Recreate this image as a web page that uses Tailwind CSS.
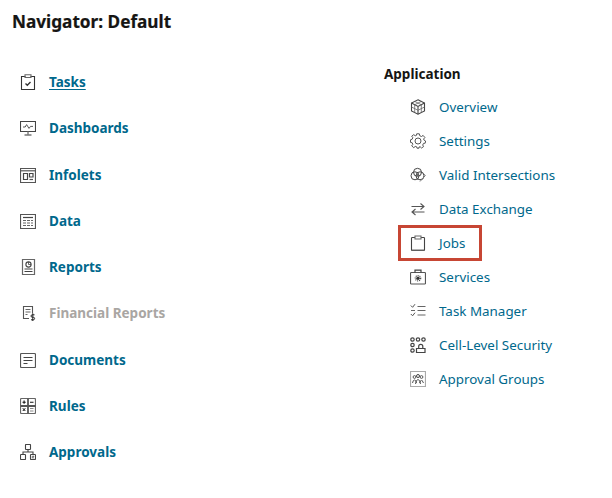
<!doctype html>
<html><head><meta charset="utf-8"><script src="https://cdn.jsdelivr.net/npm/@tailwindcss/browser@4"></script></head>
<body class="bg-white w-[612px] h-[498px] overflow-hidden font-['Noto_Sans']">
<div class="pl-3 pt-[10px] h-[59px]"><h1 class="text-[17.2px] leading-6 font-bold text-[#161513] [-webkit-text-stroke:0.2px_#161513]">Navigator: Default</h1></div>
<div class="flex pl-5">
<div class="w-[364px] pt-[11px] flex flex-col gap-[22.25px] text-[13.5px] leading-6 font-bold text-[#00688c]">
<div class="flex items-center gap-[13px]">
<svg class="w-4 h-4 shrink-0" viewBox="0 0 16 16" fill="none" stroke="#333" stroke-width="1.1"><path d="M5.5 2.5H1.5V15.5H14.5V2.5H10.5"/><path d="M5 .8H11V3.5H5Z" stroke="#666"/><path d="M5.5 9.5L7.3 11.2L10.5 8" stroke-width="1.4"/></svg>
<span class="underline underline-offset-2">Tasks</span></div>
<div class="flex items-center gap-[13px]">
<svg class="w-4 h-4 shrink-0" viewBox="0 0 16 16" fill="none" stroke="#444" stroke-width="1.1"><path d="M.5 1.5H15.5V11.5H.5Z"/><path d="M3 7H5.2L6.6 4.6L9 8.4L10.5 6.4H13" stroke-width=".9"/><path d="M8 11.5V14.5M4.5 15H11.5" stroke-width="1.4" stroke="#777"/></svg>
Dashboards</div>
<div class="flex items-center gap-[13px]">
<svg class="w-4 h-4 shrink-0" viewBox="0 0 16 16" fill="none" stroke="#555" stroke-width="1.2"><path d="M.5 1.5H15.5V15.5H.5Z"/><path d="M.5 3.8H15.5" /><path d="M3.5 6.5H7.5V12.5H3.5ZM9.5 6.5H13V10H9.5Z" stroke="#444"/><path d="M9.5 12.5H13"/></svg>
Infolets</div>
<div class="flex items-center gap-[13px]">
<svg class="w-4 h-4 shrink-0" viewBox="0 0 16 16" fill="none" stroke="#555" stroke-width="1.2"><path d="M.5 1.5H15.5V15.5H.5Z"/><path d="M3 4.5H13" stroke="#444" stroke-width="1.2"/><path d="M3 7.5H13M3 10H13M3 12.5H13" stroke-dasharray="3 1" stroke="#666"/></svg>
Data</div>
<div class="flex items-center gap-[13px]">
<svg class="w-4 h-4 shrink-0" viewBox="0 0 16 16" fill="none" stroke="#444" stroke-width="1.1"><path d="M2.5 .5H14.5V15.5H2.5Z" stroke="#666" stroke-width="1.2"/><circle cx="8.5" cy="5.5" r="2.6"/><path d="M8.5 5.5V2.9M8.5 5.5H11.1" stroke-width=".8"/><path d="M4.5 10H12.5M4.5 12.5H12.5" stroke-width="1.2"/></svg>
Reports</div>
<div class="flex items-center gap-[13px] text-[#a9a6a3]">
<svg class="w-4 h-4 shrink-0" viewBox="0 0 16 16" fill="none" stroke="#555" stroke-width="1.1"><path d="M9 13.5H3.5V1.5H12.5V8.5"/><path d="M5.5 4.5H10.5M5.5 7H10.5M5.5 9.5H7.5" stroke-width=".9"/><path d="M14.5 9.8H12.3Q11 9.8 11 11T12.3 12.3H13.3Q14.6 12.3 14.6 13.5T13.3 14.8H11M12.8 8.5V16" stroke="#222" stroke-width="1"/></svg>
Financial Reports</div>
<div class="flex items-center gap-[13px]">
<svg class="w-4 h-4 shrink-0" viewBox="0 0 16 16" fill="none" stroke="#555" stroke-width="1.2"><rect x=".5" y="1.5" width="15" height="14" rx="1"/><path d="M3.5 5.5H12.5M3.5 8.5H12.5M3.5 11.5H7.5" stroke="#444"/></svg>
Documents</div>
<div class="flex items-center gap-[13px]">
<svg class="w-4 h-4 shrink-0" viewBox="0 0 16 16" fill="none" stroke="#555"><rect x=".5" y=".5" width="15" height="15" rx="1" stroke="#666" stroke-width="1.2"/><path d="M8 .5V15.5M.5 8H15.5" stroke="#555" stroke-width="1.8"/><path d="M2.5 4.2H5.7M4.1 2.5V5.8M10 4.2H13.5" stroke="#111" stroke-width="1.1"/><path d="M2.8 10.2L5.3 13M5.3 10.2L2.8 13" stroke="#111"/><path d="M10 10.5H13.5M10 13H13.5" stroke="#888"/></svg>
Rules</div>
<div class="flex items-center gap-[13px]">
<svg class="w-4 h-4 shrink-0" viewBox="0 0 16 16" fill="none" stroke="#444" stroke-width="1.1"><rect x="5.5" y=".5" width="5" height="5" rx=".6"/><rect x=".5" y="10.5" width="5" height="5" rx=".6"/><rect x="10.5" y="10.5" width="5" height="5" rx=".6"/><path d="M8 5.5V8M3 10.5V8H13V10.5"/><path d="M12.3 14.5V12.2H14L13 13.4L14.2 14.5" stroke-width=".7"/></svg>
Approvals</div>
</div>
<div class="text-[13.4px] text-[#00688c]">
<div class="font-bold text-[13.5px] text-[#161513] leading-6 mt-[3px] mb-[9px]">Application</div>
<div class="flex flex-col gap-[10px] pl-[26px] leading-6">
<div class="flex items-center gap-[13px]">
<svg class="w-4 h-4 shrink-0" viewBox="0 0 16 16" fill="none" stroke="#444" stroke-width="1.1"><path d="M8 .8L14.5 4V12L8 15.2L1.5 12V4Z"/><path d="M1.5 4L8 7.4L14.5 4M8 7.4V15.2"/><path d="M4.7 2.4L11.2 5.7M11.3 2.4L4.8 5.7M4.7 5.7V13.6M11.3 5.7V13.6M1.5 8L8 11.3L14.5 8" stroke-width=".8" stroke="#666"/></svg>
Overview</div>
<div class="flex items-center gap-[13px]">
<svg class="w-4 h-4 shrink-0" viewBox="0 0 16 16" fill="none" stroke="#555" stroke-width="1"><circle cx="8" cy="8" r="3"/><path d="M6.7.8H9.3L9.8 2.8L11.5 3.5L13.1 2.4L14.9 4.5L13.6 6L14.1 7.2L15.6 8L15.2 10.2L13.5 10.4L12.7 12L13.6 13.6L11.5 15L10.2 13.8L9 14V15.2H7L6.7 13.8L5.2 13.4L3.8 14.7L1.7 12.9L2.8 11.4L2.2 9.8L.5 9.4V6.8L2.2 6.2L2.8 4.7L1.7 3.2L3.8 1.6L5.2 2.8L6.4 2.4Z" stroke-linejoin="round"/></svg>
Settings</div>
<div class="flex items-center gap-[13px]">
<svg class="w-4 h-4 shrink-0" viewBox="0 0 16 16" fill="none" stroke="#444" stroke-width="1"><circle cx="7.5" cy="5.3" r="4"/><circle cx="5" cy="8.8" r="4"/><circle cx="10" cy="8.8" r="4"/><path d="M6.5 6.8H8.8V9H6.5Z" fill="#666" stroke="none"/><path d="M12.5 5.5L15.3 8.6L10 14.5" stroke="#777"/></svg>
Valid Intersections</div>
<div class="flex items-center gap-[13px]">
<svg class="w-4 h-4 shrink-0" viewBox="0 0 16 16" fill="none" stroke="#555" stroke-width="1.1"><path d="M1.5 5.5H14M10.5 2.5L14 5.5L10.5 8.5M14.5 11H2M5.5 8L2 11L5.5 14"/></svg>
Data Exchange</div>
<div class="relative flex items-center gap-[13px]">
<span class="absolute left-[-12px] top-[-6px] w-[84px] h-9 border-[3px] border-[#c74634]"></span>
<svg class="w-4 h-4 shrink-0" viewBox="0 0 16 16" fill="none" stroke="#444" stroke-width="1.1"><path d="M5 2.5H2.2Q1.5 2.5 1.5 3.2V14.8Q1.5 15.5 2.2 15.5H13.8Q14.5 15.5 14.5 14.8V3.2Q14.5 2.5 13.8 2.5H11"/><path d="M5 1H11V4H5Z" stroke="#666"/><path d="M2 15H14" stroke="#777"/></svg>
Jobs</div>
<div class="flex items-center gap-[13px]">
<svg class="w-4 h-4 shrink-0" viewBox="0 0 16 16" fill="none" stroke="#555" stroke-width="1.2"><rect x=".5" y="3.5" width="15" height="11.5" rx=".8"/><path d="M5 3.5V1.2H11V3.5" stroke="#444"/><circle cx="8" cy="9.2" r="1.7" fill="#333" stroke="none"/><circle cx="8" cy="9.2" r="2.7" stroke="#444" stroke-dasharray="1 1"/></svg>
Services</div>
<div class="flex items-center gap-[13px]">
<svg class="w-4 h-4 shrink-0" viewBox="0 0 16 16" fill="none" stroke="#555"><path d="M.8 2.5L2.6 4.3L5 1.2M.8 11L2.6 12.8L5 9.7" stroke-width="1"/><path d="M1 7.5H5M7.5 3.5H15.5M7.5 7.5H15.5M7.5 12H15.5" stroke="#666" stroke-width="1.1"/></svg>
Task Manager</div>
<div class="flex items-center gap-[13px]">
<svg class="w-4 h-4 shrink-0" viewBox="0 0 16 16" fill="none" stroke="#444" stroke-width="1.2"><circle cx="2.5" cy="2.5" r="1.7"/><circle cx="8" cy="2.5" r="1.7"/><circle cx="13.5" cy="2.5" r="1.7"/><circle cx="2.5" cy="8" r="1.7"/><circle cx="2.5" cy="13.5" r="1.7"/><path d="M6.5 11.5H15V15.5H6.5Z"/><path d="M8.7 11.5V9.5A2 2 0 0 1 12.8 9.5V11.5"/></svg>
Cell-Level Security</div>
<div class="flex items-center gap-[13px]">
<svg class="w-4 h-4 shrink-0" viewBox="0 0 16 16" fill="none" stroke="#555"><rect x=".5" y=".5" width="15" height="15" stroke-dasharray="1 1" stroke="#555" stroke-width="1.2"/><circle cx="4.5" cy="6" r="1.4"/><circle cx="8" cy="5" r="1.5" stroke="#444"/><circle cx="11.5" cy="6" r="1.4"/><path d="M2.5 12Q3 9 4.5 9T6.5 12M5.5 13Q6 8.5 8 8.5T10.5 13M9.5 12Q11 9 11.5 9T13.5 12" stroke-width="1"/></svg>
Approval Groups</div>
</div>
</div>
</div>
</body></html>
